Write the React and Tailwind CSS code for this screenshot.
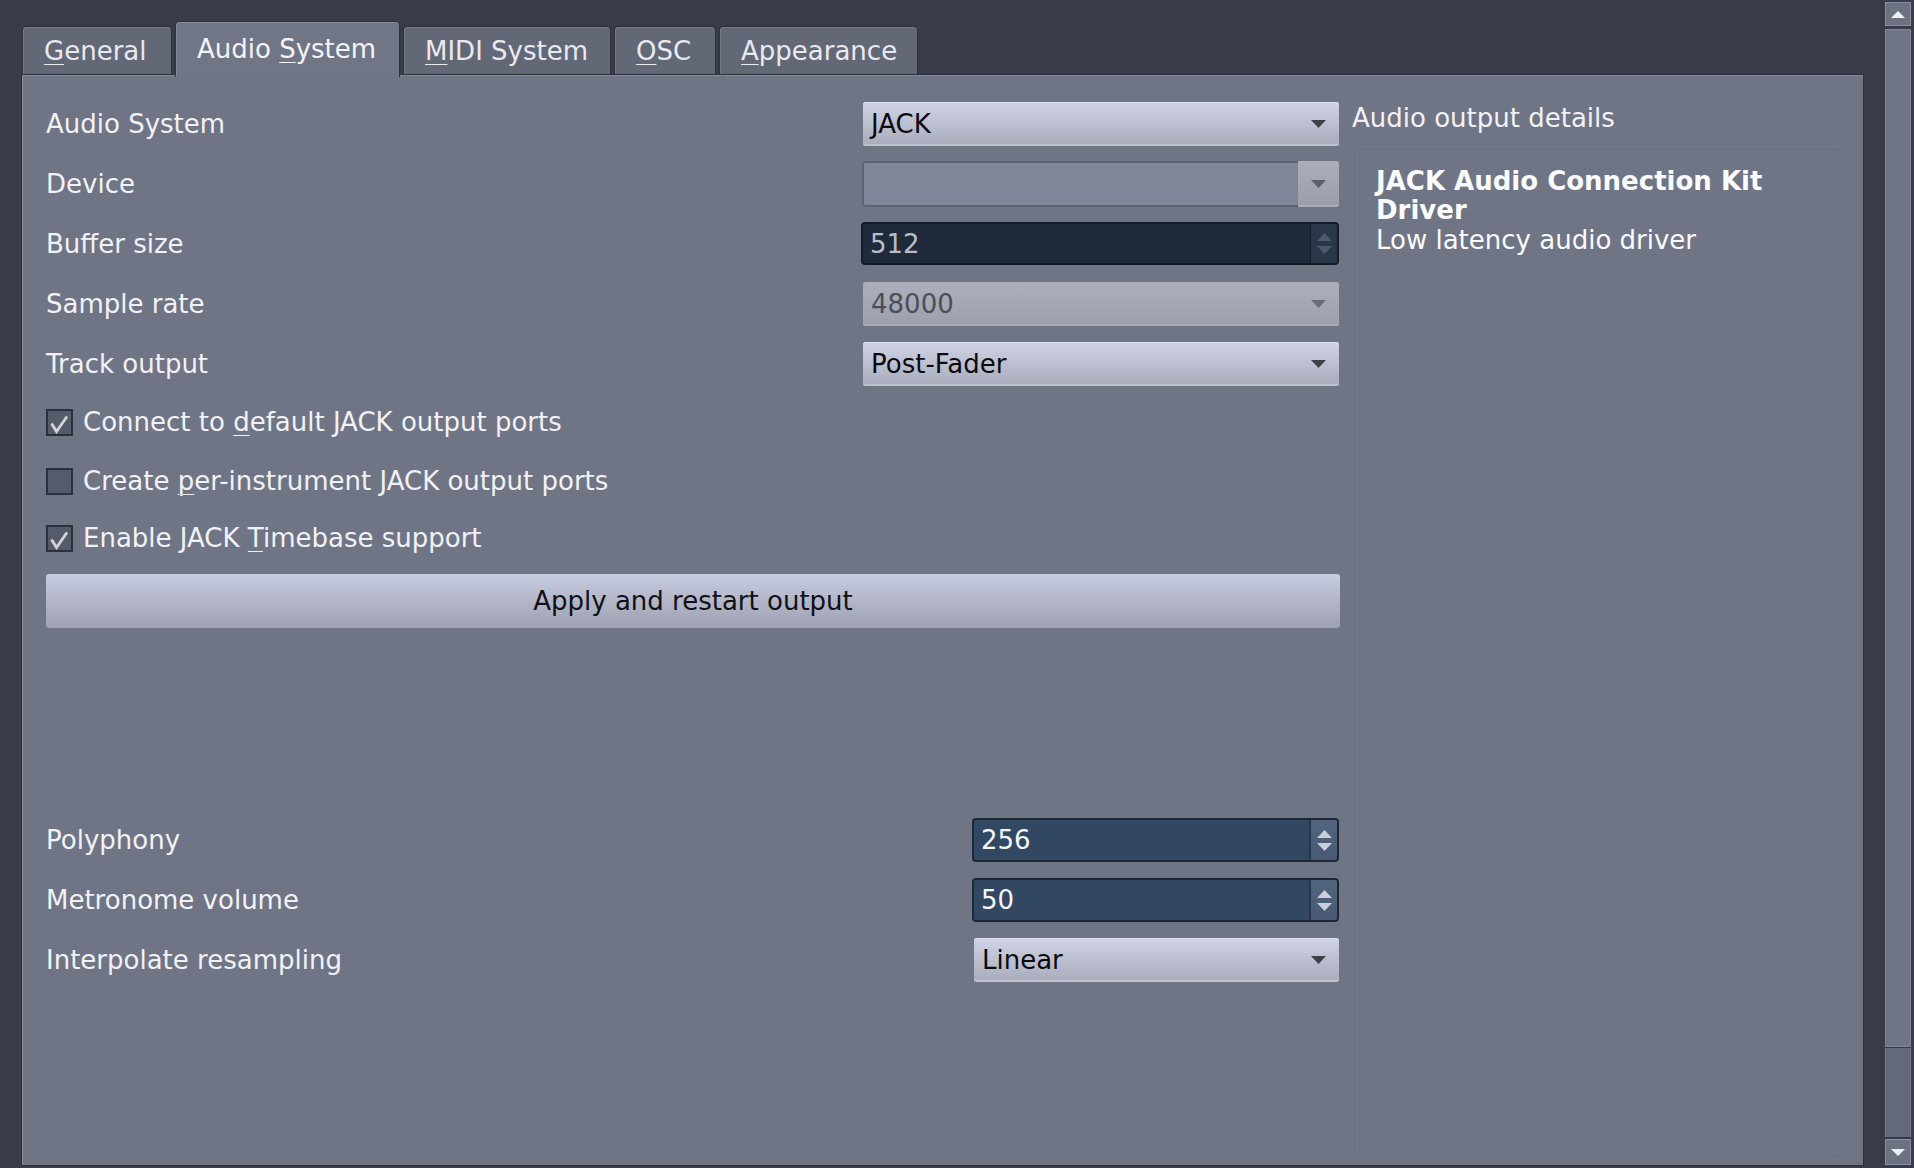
import React from "react";

function Tri({ color = "#3d4048", up = false, w = 15, h = 8 }) {
  return (
    <svg width={w} height={h} viewBox={`0 0 ${w} ${h}`}>
      {up ? (
        <path d={`M0 ${h}H${w}L${w / 2} 0Z`} fill={color} />
      ) : (
        <path d={`M0 0H${w}L${w / 2} ${h}Z`} fill={color} />
      )}
    </svg>
  );
}

function Combo({ text, width = "w-[476px]" }) {
  return (
    <div
      className={`${width} h-[44px] rounded-[3px] bg-linear-to-b from-[#d0d4e6] to-[#a8abba] shadow-[inset_0_-2px_0_#bdc0cd,inset_0_1px_0_#dde0ee] flex items-center justify-between pl-[8px] pr-[13px] text-[#0b0b0d]`}
    >
      <span>{text}</span>
      <Tri color="#3e4149" />
    </div>
  );
}

function Spin({ value, dark = false, width = "w-[476px]" }) {
  if (dark) {
    return (
      <div className={`${width} h-[43px] rounded-[4px] border-2 border-[#131b25] bg-[#1f2b3b] flex items-stretch`}>
        <div className="flex-1 flex items-center pl-[7px] text-[#b8bdc8]">{value}</div>
        <div className="w-[27px] bg-[#2a3748] border-l border-[#17202b] rounded-r-[2px] flex flex-col items-center justify-center gap-[5px]">
          <Tri color="#4d586a" up w={15} h={8} />
          <Tri color="#4d586a" w={15} h={8} />
        </div>
      </div>
    );
  }
  return (
    <div className={`${width} h-[44px] rounded-[4px] border-2 border-[#1d2735] bg-[#324762] flex items-stretch`}>
      <div className="flex-1 flex items-center pl-[7px] text-[#f4f5f8]">{value}</div>
      <div className="w-[28px] bg-linear-to-b from-[#52647e] to-[#475973] border-l-2 border-[#28344a] rounded-r-[2px] flex flex-col items-center justify-center gap-[5px]">
        <Tri color="#c9cfdb" up w={15} h={8} />
        <Tri color="#c9cfdb" w={15} h={8} />
      </div>
    </div>
  );
}

function Check({ checked }) {
  return (
    <div className="w-[27px] h-[27px] border-2 border-[#2c303b] bg-[#565b6c] flex items-center justify-center">
      {checked && (
        <svg width="23" height="23" viewBox="0 0 23 23">
          <path d="M3.5 12.5 L8.5 20.5 L19 5.5" stroke="#d3d5db" strokeWidth="2.8" fill="none" strokeLinejoin="miter" />
        </svg>
      )}
    </div>
  );
}

function Row({ label, children, className = "" }) {
  return (
    <div className={`flex items-center justify-between ${className}`}>
      <span className="text-[#f1f2f5]">{label}</span>
      {children}
    </div>
  );
}

function CheckRow({ checked, children, className = "" }) {
  return (
    <div className={`h-[44px] flex items-center gap-[10px] ${className}`}>
      <Check checked={checked} />
      <span className="text-[#f1f2f5]">{children}</span>
    </div>
  );
}

const U = ({ children }) => (
  <span className="underline decoration-1 underline-offset-[4px]">{children}</span>
);

function Tab({ active, width, children }) {
  if (active) {
    return (
      <div
        className={`${width} h-[56px] -mb-[3px] relative z-10 rounded-t-[4px] border border-b-0 border-[#2e313b] bg-[#717687] shadow-[inset_1px_1px_0_#858a9a] flex items-center pl-[21px] pb-[2px] text-[#f3f4f7]`}
      >
        {children}
      </div>
    );
  }
  return (
    <div
      className={`${width} h-[48px] rounded-t-[4px] border border-b-0 border-[#2e313b] bg-[#636877] shadow-[inset_1px_1px_0_#767b8b] flex items-center pl-[21px] text-[#e9eaef]`}
    >
      {children}
    </div>
  );
}

export default function App() {
  return (
    <div className="w-[1914px] h-[1168px] bg-[#393c48] flex overflow-hidden font-['DejaVu_Sans',sans-serif] text-[26px] leading-[30px]">
      {/* main area */}
      <div className="w-[1864px] pl-[21px] pt-[22px] flex flex-col">
        {/* tabs */}
        <div className="h-[52px] flex items-end gap-[3px] pl-[1px]">
          <Tab width="w-[150px]"><span><U>G</U>eneral</span></Tab>
          <Tab active width="w-[225px]"><span>Audio <U>S</U>ystem</span></Tab>
          <Tab width="w-[208px]"><span><U>M</U>IDI System</span></Tab>
          <Tab width="w-[102px]"><span><U>O</U>SC</span></Tab>
          <Tab width="w-[199px]"><span><U>A</U>ppearance</span></Tab>
        </div>
        {/* panel */}
        <div className="h-[1092px] border border-[#2c2f39] bg-[#707586] shadow-[inset_1px_1px_0_#868b9b] flex pl-[24px] pt-[27px] pb-[8px] pr-[24px]">
          {/* left column */}
          <div className="w-[1293px] flex flex-col">
            <Row label="Audio System" className="h-[44px]">
              <Combo text="JACK" />
            </Row>
            <Row label="Device" className="h-[46px] mt-[15px]">
              <div className="w-[477px] h-[46px] flex">
                <div className="flex-1 bg-[#808597] border-2 border-r-0 border-[#5e6271] rounded-l-[3px]" />
                <div className="w-[41px] bg-linear-to-b from-[#aaadba] to-[#9a9dab] rounded-r-[3px] shadow-[inset_0_-2px_0_#a9acb9] flex items-center justify-center">
                  <Tri color="#5c5f69" />
                </div>
              </div>
            </Row>
            <Row label="Buffer size" className="h-[43px] mt-[15px]">
              <Spin value="512" dark width="w-[478px]" />
            </Row>
            <Row label="Sample rate" className="h-[44px] mt-[17px]">
              <div className="w-[476px] h-[44px] rounded-[3px] bg-linear-to-b from-[#acafbc] to-[#9c9fad] shadow-[inset_0_-2px_0_#a8abb8] flex items-center justify-between pl-[8px] pr-[13px] text-[#4b4e57]">
                <span>48000</span>
                <Tri color="#696c76" />
              </div>
            </Row>
            <Row label="Track output" className="h-[44px] mt-[16px]">
              <Combo text="Post-Fader" />
            </Row>

            <CheckRow checked className="mt-[14px]">
              Connect to <U>d</U>efault JACK output ports
            </CheckRow>
            <CheckRow className="mt-[15px]">
              Create <U>p</U>er-instrument JACK output ports
            </CheckRow>
            <CheckRow checked className="mt-[13px]">
              Enable JACK <U>T</U>imebase support
            </CheckRow>

            <div className="mt-[14px] h-[54px] w-[1294px] rounded-[3px] bg-linear-to-b from-[#c8cce0] to-[#9ea1b1] flex items-center justify-center text-[#101114]">
              Apply and restart output
            </div>

            <Row label="Polyphony" className="h-[44px] mt-[190px]">
              <Spin value="256" width="w-[367px]" />
            </Row>
            <Row label="Metronome volume" className="h-[44px] mt-[16px]">
              <Spin value="50" width="w-[367px]" />
            </Row>
            <Row label="Interpolate resampling" className="h-[44px] mt-[16px]">
              <Combo text="Linear" width="w-[365px]" />
            </Row>
          </div>

          {/* right column */}
          <div className="ml-[13px] flex-1 flex flex-col">
            <div className="pt-[1px] text-[#f1f2f5]">Audio output details</div>
            <div className="mt-[16px] ml-[2px] flex-1 border border-[#6a6f7f] pl-[21px] pt-[17px] text-[#fafbfc]">
              <div className="font-bold leading-[29px]">
                JACK Audio Connection Kit
                <br />
                Driver
              </div>
              <div className="leading-[31px]">Low latency audio driver</div>
            </div>
          </div>
        </div>
      </div>

      {/* spacer */}
      <div className="flex-1" />

      {/* scrollbar */}
      <div className="w-[26px] mr-[3px] pt-[2px] pb-[3px] flex flex-col">
        <div className="h-[24px] bg-[#6d7283] border border-[#8a8fa0] flex items-center justify-center">
          <Tri color="#eef0f4" up w={14} h={7} />
        </div>
        <div className="mt-[3px] h-[1018px] bg-[#707586] border border-[#80859a]" />
        <div className="mt-[1px] flex-1 bg-[#646979] border-x border-[#777c8c]" />
        <div className="mt-[2px] h-[26px] bg-[#6d7283] border border-[#8a8fa0] flex items-center justify-center">
          <Tri color="#eef0f4" w={14} h={7} />
        </div>
      </div>
    </div>
  );
}
